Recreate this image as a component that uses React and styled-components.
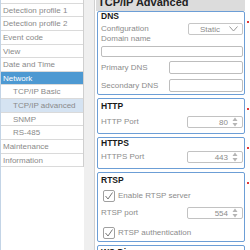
import React from "react";
import styled, {createGlobalStyle} from "styled-components";

const GlobalStyle = createGlobalStyle`
  html, body {
    margin: 0;
    padding: 0;
    overflow: hidden;
    background: #ffffff;
  }
  body {
    font-family: "Liberation Sans", Arial, sans-serif;
  }
`;

const menu = [
    {label: "Video"},
    {label: "Detection profile 1"},
    {label: "Detection profile 2"},
    {label: "Event code"},
    {label: "View"},
    {label: "Date and Time"},
    {label: "Network", active: true},
    {label: "TCP/IP Basic", sub: true},
    {label: "TCP/IP advanced", sub: true, selected: true},
    {label: "SNMP", sub: true},
    {label: "RS-485", sub: true},
    {label: "Maintenance"},
    {label: "Information"},
];

function Chevron() {
    return (
        <svg width="9" height="6" viewBox="0 0 9 6">
            <polyline points="0.5,0.5 4.5,5 8.5,0.5" fill="none" stroke="#999" strokeWidth="1"/>
        </svg>
    );
}

function Spinner() {
    return (
        <SpinWrap>
            <svg width="6" height="10" viewBox="0 0 6 10">
                <polygon points="3,0.5 5.5,4 0.5,4" fill="#b5b5b5"/>
                <polygon points="3,9.5 5.5,6 0.5,6" fill="#b5b5b5"/>
            </svg>
        </SpinWrap>
    );
}

function Check() {
    return (
        <CheckBox>
            <svg width="10" height="10" viewBox="0 0 10 10">
                <polyline points="1.5,5 4,8 8.5,1.5" fill="none" stroke="#777" strokeWidth="1"/>
            </svg>
        </CheckBox>
    );
}

function NumberField({value}) {
    return (
        <NumBox>
            <NumText>{value}</NumText>
            <Spinner/>
        </NumBox>
    );
}

function Section({title, top, bottom, children}) {
    return (
        <Box $top={top} $bottom={bottom}>
            <BoxTitle>{title}</BoxTitle>
            {children}
            <RedMark/>
        </Box>
    );
}

export default function App() {
    return (
        <>
            <GlobalStyle/>
            <Page>
                <Sidebar>
                    <MenuList>
                        {menu.map((m) => (
                            <MenuItem key={m.label} $sub={m.sub} $active={m.active} $selected={m.selected}>
                                {m.label}
                            </MenuItem>
                        ))}
                    </MenuList>
                </Sidebar>
                <Gutter/>
                <Main>
                    <TitleBar>TCP/IP Advanced</TitleBar>
                    <Sections>
                        <Section title="DNS" top={0} bottom={2}>
                            <Row $mt={2}>
                                <Label>Configuration</Label>
                                <Select>
                                    <span>Static</span>
                                    <Chevron/>
                                </Select>
                            </Row>
                            <Label>Domain name</Label>
                            <TextInput $mt={3} $h={11}/>
                            <Row $mt={4}>
                                <Label>Primary DNS</Label>
                                <TextInput $w={74} $h={13}/>
                            </Row>
                            <Row $mt={5}>
                                <Label>Secondary DNS</Label>
                                <TextInput $w={74} $h={13}/>
                            </Row>
                        </Section>
                        <Section title="HTTP" top={3} bottom={5}>
                            <Row $mt={5}>
                                <Label>HTTP Port</Label>
                                <NumberField value="80"/>
                            </Row>
                        </Section>
                        <Section title="HTTPS" top={1} bottom={5}>
                            <Row $mt={3}>
                                <Label>HTTPS Port</Label>
                                <NumberField value="443"/>
                            </Row>
                        </Section>
                        <Section title="RTSP" top={3} bottom={2}>
                            <CheckRow $mt={5}>
                                <Check/>
                                <Label>Enable RTSP server</Label>
                            </CheckRow>
                            <Row $mt={5}>
                                <Label>RTSP port</Label>
                                <NumberField value="554"/>
                            </Row>
                            <CheckRow $mt={8}>
                                <Check/>
                                <Label>RTSP authentication</Label>
                            </CheckRow>
                        </Section>
                        <Section title="WS-Discovery" top={2} bottom={10}>
                            <Row $mt={5}>
                                <Label>WS-Discovery</Label>
                            </Row>
                        </Section>
                    </Sections>
                </Main>
            </Page>
        </>
    );
}

const Page = styled.div`
  display: flex;
  margin-top: -10px;
  height: 270px;
  border-left: 1px solid #c3d4e6;
`;

const Sidebar = styled.div`
  width: 83px;
  flex-shrink: 0;
  background: #fff;
`;

const MenuList = styled.div`
  display: flex;
  flex-direction: column;
  border-right: 1px solid #cfcfcf;
`;

const MenuItem = styled.div`
  box-sizing: border-box;
  height: 13.64px;
  line-height: 13px;
  padding-left: ${(p) => (p.$sub ? "12px" : "2px")};
  font-size: 8px;
  white-space: nowrap;
  overflow: hidden;
  color: ${(p) => (p.$active ? "#ffffff" : "#8a8a8a")};
  background: ${(p) => (p.$active ? "#4d99d2" : p.$selected ? "#d5e3f2" : "#ffffff")};
  border-bottom: 1px solid #dadada;
`;

const Gutter = styled.div`
  width: 10px;
  flex-shrink: 0;
  background: #efefef;
  border-right: 1px solid #d0d0d0;
`;

const Main = styled.div`
  flex: 1;
  background: #fff;
  padding-left: 1px;
  padding-right: 5px;
`;

const TitleBar = styled.div`
  box-sizing: border-box;
  height: 20.5px;
  padding-top: 7px;
  padding-left: 2px;
  line-height: 10px;
  font-size: 11px;
  font-weight: bold;
  color: #222;
  background: #dcdcdc;
`;

const Sections = styled.div`
  display: flex;
  flex-direction: column;
  gap: 3px;
  margin-top: 0.5px;
  padding-left: 1px;
`;

const Box = styled.div`
  position: relative;
  border: 1px solid #6c9ed6;
  border-radius: 2px;
  padding: ${(p) => p.$top}px 1px ${(p) => p.$bottom}px 3px;
  display: flex;
  flex-direction: column;
`;

const RedMark = styled.div`
  position: absolute;
  right: -5px;
  top: 9px;
  width: 2px;
  height: 2px;
  background: #e0393a;
`;

const BoxTitle = styled.div`
  font-size: 8.5px;
  line-height: 9px;
  font-weight: bold;
  color: #1a1a1a;
`;

const Row = styled.div`
  display: flex;
  justify-content: space-between;
  align-items: center;
  margin-top: ${(p) => p.$mt || 0}px;
`;

const CheckRow = styled.div`
  display: flex;
  align-items: center;
  gap: 3px;
  margin-top: ${(p) => p.$mt || 0}px;
  padding-left: 2px;
`;

const Label = styled.div`
  font-size: 8px;
  line-height: 8px;
  color: #8c8c8c;
  white-space: nowrap;
`;

const TextInput = styled.div`
  box-sizing: border-box;
  width: ${(p) => (p.$w ? `${p.$w}px` : "auto")};
  height: ${(p) => p.$h}px;
  margin-top: ${(p) => p.$mt || 0}px;
  border: 1px solid #bdbdbd;
  border-radius: 2px;
  background: #fff;
`;

const Select = styled.div`
  box-sizing: border-box;
  width: 55px;
  height: 12px;
  border: 1px solid #c6c6c6;
  border-radius: 2px;
  display: flex;
  align-items: center;
  justify-content: flex-end;
  gap: 9px;
  padding-right: 4px;
  font-size: 8px;
  color: #8c8c8c;
`;

const NumBox = styled.div`
  box-sizing: border-box;
  width: 56px;
  height: 12px;
  border: 1px solid #c2c2c2;
  border-radius: 2px;
  display: flex;
  align-items: center;
  justify-content: flex-end;
  gap: 4px;
  padding-right: 4px;
`;

const NumText = styled.span`
  font-size: 8px;
  color: #8c8c8c;
`;

const SpinWrap = styled.span`
  display: flex;
`;

const CheckBox = styled.div`
  box-sizing: border-box;
  width: 12px;
  height: 12px;
  border: 1px solid #a0a0a0;
  border-radius: 2px;
  display: flex;
  align-items: center;
  justify-content: center;
`;
